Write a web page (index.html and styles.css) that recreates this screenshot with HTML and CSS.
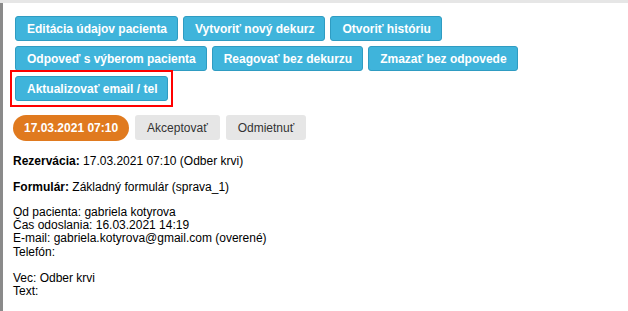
FILE: index.html
```html
<!DOCTYPE html>
<html lang="sk">
<head>
    <meta charset="UTF-8">
    <title>Správa pacienta</title>
    <link rel="stylesheet" href="styles.css">
</head>
<body>
    <div class="top-strip"></div>
    <div class="page">
        <div class="content">
            <div class="actions">
                <button class="btn-info">Editácia údajov pacienta</button>
                <button class="btn-info">Vytvoriť nový dekurz</button>
                <button class="btn-info">Otvoriť históriu</button>
                <button class="btn-info">Odpoveď s výberom pacienta</button>
                <button class="btn-info">Reagovať bez dekurzu</button>
                <button class="btn-info">Zmazať bez odpovede</button>
            </div>
            <div class="actions">
                <span class="highlight"><button class="btn-info">Aktualizovať email / tel</button></span>
            </div>

            <div class="reservation-bar">
                <span class="date-pill">17.03.2021 07:10</span>
                <button class="btn-light">Akceptovať</button>
                <button class="btn-light">Odmietnuť</button>
            </div>

            <p class="info-line"><b>Rezervácia:</b> 17.03.2021 07:10 (Odber krvi)</p>
            <p class="info-line"><b>Formulár:</b> Základný formulár (sprava_1)</p>

            <div class="message">
                Od pacienta: gabriela kotyrova<br>
                Čas odoslania: 16.03.2021 14:19<br>
                E-mail: gabriela.kotyrova@gmail.com (overené)<br>
                Telefón:<br>
                <br>
                Vec: Odber krvi<br>
                Text:
            </div>
        </div>
    </div>
</body>
</html>
```

FILE: styles.css
```css
* {
    margin: 0;
    padding: 0;
    box-sizing: border-box;
}

body {
    font-family: 'Liberation Sans', Arial, sans-serif;
    font-size: 12px;
    color: #000;
    background: #fff;
}

.top-strip {
    height: 3px;
    background: #e6e6e6;
}

.page {
    border-left: 3px solid #8a8a8a;
    min-height: 308px;
}

.content {
    padding: 13px 10px 0 10px;
}

.actions {
    display: flex;
    flex-wrap: wrap;
    gap: 5px;
    margin-left: 2px;
    margin-bottom: 5px;
}

.btn-info {
    height: 25px;
    padding: 0 10px 0 11px;
    background: #3fb4db;
    border: 1px solid #2f9cc2;
    border-radius: 3px;
    color: #fff;
    font-family: inherit;
    font-size: 12px;
    font-weight: bold;
}

.highlight {
    position: relative;
    display: inline-block;
}

.highlight::after {
    content: "";
    position: absolute;
    top: -6px;
    bottom: -6px;
    left: -5px;
    right: -5px;
    border: 2px solid #f00;
}

.reservation-bar {
    display: flex;
    gap: 6px;
    margin-top: 14px;
    margin-bottom: 13px;
}

.date-pill {
    display: inline-flex;
    align-items: center;
    height: 26px;
    padding: 0 11px;
    background: #e07a1f;
    color: #fff;
    border-radius: 13px;
    font-size: 12px;
    font-weight: bold;
}

.btn-light {
    height: 25px;
    padding: 0 12px;
    background: #e6e6e6;
    border: none;
    border-radius: 3px;
    color: #333;
    font-family: inherit;
    font-size: 12px;
}

.info-line {
    line-height: 14px;
    margin-bottom: 12px;
}

.message {
    margin-top: 12px;
    line-height: 13.2px;
}
```
